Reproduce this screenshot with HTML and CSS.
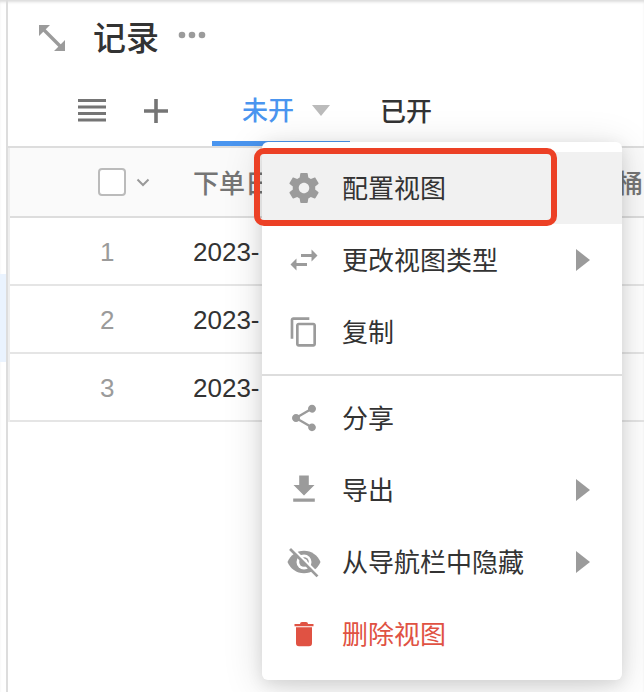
FILE: index.html
```html
<!DOCTYPE html>
<html lang="zh-CN">
<head>
  <meta charset="UTF-8">
  <meta name="viewport" content="width=device-width, initial-scale=1.0">
  <title>记录</title>
  <link rel="stylesheet" href="styles.css">
</head>
<body>
  <div class="app">
    <aside class="sidebar"><div class="sidebar-active"></div></aside>
    <main class="main">
      <header class="title-bar">
        <button class="icon-btn expand" aria-label="展开">
          <svg width="26" height="26" viewBox="0 0 26 26" fill="#9b9b9b"><path d="M0 0h11L0 11zM26 26H15L26 15z"/><path d="M4 4l18 18" stroke="#9b9b9b" stroke-width="3.300"/></svg>
        </button>
        <h1>记录</h1>
        <button class="icon-btn more" aria-label="更多">
          <svg width="28" height="8" viewBox="0 0 28 8" fill="#9b9b9b"><circle cx="4" cy="4" r="3.300"/><circle cx="14" cy="4" r="3.300"/><circle cx="24" cy="4" r="3.300"/></svg>
        </button>
      </header>

      <nav class="tab-bar">
        <button class="icon-btn" aria-label="视图列表">
          <svg width="28" height="24" viewBox="0 0 28 24" fill="#757575"><path d="M0 0h28v3H0zM0 6.500h28v3H0zM0 13h28v3H0zM0 19.500h28v3H0z"/></svg>
        </button>
        <button class="icon-btn add" aria-label="添加视图">
          <svg width="24" height="24" viewBox="0 0 24 24" fill="#757575"><path d="M10.200 0h3.600v10.200H24v3.600H13.800V24h-3.600V13.800H0v-3.600h10.200z"/></svg>
        </button>
        <div class="tab-wrap">
          <button class="tab active"><span>未开</span>
            <svg width="18" height="11" viewBox="0 0 18 11"><path d="M0 0h18L9 11z" fill="#bbb"/></svg>
          </button>
          <div class="menu">
            <button class="menu-item current">
              <svg width="36" height="36" viewBox="0 0 24 24"><path d="M19.430 12.980c.04-.32.07-.64.07-.98s-.03-.66-.07-.98l2.110-1.650c.19-.15.24-.42.12-.64l-2-3.460c-.12-.22-.39-.3-.61-.22l-2.490 1c-.52-.4-1.080-.73-1.690-.98l-.38-2.650C14.460 2.180 14.250 2 14 2h-4c-.25 0-.46.18-.49.42l-.38 2.650c-.61.25-1.170.59-1.690.98l-2.490-1c-.23-.09-.49 0-.61.22l-2 3.460c-.13.22-.07.49.12.64l2.110 1.650c-.04.32-.07.65-.07.98s.03.66.07.98l-2.110 1.650c-.19.15-.24.42-.12.64l2 3.460c.12.22.39.3.61.22l2.490-1c.52.4 1.080.73 1.690.98l.38 2.650c.03.24.24.42.49.42h4c.25 0 .46-.18.49-.42l.38-2.650c.61-.25 1.170-.59 1.690-.98l2.490 1c.23.09.49 0 .61-.22l2-3.460c.12-.22.07-.49-.12-.64l-2.110-1.650zM12 15.500c-1.930 0-3.500-1.570-3.500-3.500s1.570-3.500 3.500-3.500 3.500 1.570 3.500 3.500-1.570 3.500-3.500 3.500z"/></svg>
              <span>配置视图</span>
            </button>
            <button class="menu-item">
              <svg width="36" height="36" viewBox="0 0 24 24"><path d="M6.990 11L3 15l3.990 4v-3H14v-2H6.990v-3zM21 9l-3.990-4v3H10v2h7.010v3L21 9z"/></svg>
              <span>更改视图类型</span>
              <i class="arrow"></i>
            </button>
            <button class="menu-item">
              <svg class="small" width="32" height="32" viewBox="0 0 24 24"><path d="M16 1H4c-1.100 0-2 .9-2 2v14h2V3h12V1zm3 4H8c-1.100 0-2 .9-2 2v14c0 1.100.9 2 2 2h11c1.100 0 2-.9 2-2V7c0-1.100-.9-2-2-2zm0 16H8V7h11v14z"/></svg>
              <span>复制</span>
            </button>
            <hr>
            <button class="menu-item">
              <svg class="small" width="32" height="32" viewBox="0 0 24 24"><path d="M18 16.080c-.76 0-1.440.3-1.960.77L8.910 12.700c.05-.23.09-.46.09-.7s-.04-.47-.09-.7l7.050-4.110c.54.5 1.250.81 2.040.81 1.660 0 3-1.340 3-3s-1.340-3-3-3-3 1.340-3 3c0 .24.04.47.09.7L8.040 9.810C7.500 9.310 6.790 9 6 9c-1.660 0-3 1.340-3 3s1.340 3 3 3c.79 0 1.500-.31 2.040-.81l7.120 4.160c-.05.21-.08.43-.08.65 0 1.610 1.310 2.920 2.920 2.920s2.920-1.310 2.920-2.920-1.310-2.920-2.920-2.920z"/></svg>
              <span>分享</span>
            </button>
            <button class="menu-item">
              <svg width="36" height="36" viewBox="0 0 24 24"><path d="M19 8.700h-3.800V2.300H8.800v6.400H5l7 7 7-7zM4.800 17.600v2.200h14.400v-2.200z"/></svg>
              <span>导出</span>
              <i class="arrow"></i>
            </button>
            <button class="menu-item">
              <svg width="36" height="36" viewBox="0 0 24 24">
                <path d="M1 12c1.730-4.390 6-7.500 11-7.500s9.270 3.110 11 7.500c-1.730 4.390-6 7.500-11 7.500S2.730 16.390 1 12z"/>
                <circle cx="12" cy="12" r="5" fill="#fff"/>
                <circle cx="12" cy="12" r="3.200"/>
                <path d="M12.300 10.200a2 2 0 0 1 1.600 1.600" fill="none" stroke="#fff" stroke-width="0.900"/>
                <path d="M4 2.600l18.200 18.200" stroke="#fff" stroke-width="1.600"/>
                <path d="M2.700 3.300L21 21.600" stroke="#9b9b9b" stroke-width="1.800"/>
              </svg>
              <span>从导航栏中隐藏</span>
              <i class="arrow"></i>
            </button>
            <button class="menu-item danger">
              <svg class="small" width="32" height="32" viewBox="0 0 32 32"><path d="M6.500 6h5.500q0-2 2-2h4q2 0 2 2h5.500v2.300h-19zM8 9.300h16v16q0 3-3 3H11q-3 0-3-3z"/></svg>
              <span>删除视图</span>
            </button>
            <div class="highlight"></div>
          </div>
        </div>
        <button class="tab"><span>已开</span></button>
      </nav>

      <table class="grid">
        <colgroup><col class="col-index"><col class="col-date"><col></colgroup>
        <thead>
          <tr>
            <th>
              <div class="select-all">
                <input type="checkbox" aria-label="全选">
                <svg width="14" height="10" viewBox="0 0 14 10"><path d="M1.500 2.500l5.500 5.500 5.500-5.500" fill="none" stroke="#999" stroke-width="2"/></svg>
              </div>
            </th>
            <th>下单日期</th>
            <th>桶</th>
          </tr>
        </thead>
        <tbody>
          <tr><td class="index">1</td><td>2023-</td><td></td></tr>
          <tr><td class="index">2</td><td>2023-</td><td></td></tr>
          <tr><td class="index">3</td><td>2023-</td><td></td></tr>
        </tbody>
      </table>
    </main>
  </div>
</body>
</html>
```

FILE: styles.css
```css
* {
  box-sizing: border-box;
}
body {
  margin: 0;
  background: #fff;
  color: #333;
  font-family: "Liberation Sans", "Noto Sans CJK SC", sans-serif;
  font-size: 26px;
}
button {
  border: 0;
  padding: 0;
  background: none;
  color: inherit;
  font: inherit;
  cursor: pointer;
}
.app {
  display: flex;
  min-height: 100vh;
  box-shadow: inset 0 3px 3px -1px rgba(0, 0, 0, 0.14);
}
.sidebar {
  flex: none;
  width: 8px;
  padding-top: 274px;
  border-right: 2px solid #ddd;
}
.sidebar-active {
  height: 88px;
  background: #eaf3fe;
}
.main {
  flex: 1;
  min-width: 0;
}

/* title */
.title-bar {
  display: flex;
  align-items: center;
  height: 76px;
  padding-left: 31px;
}
.icon-btn {
  display: flex;
}
h1 {
  margin: 2px 19px 0 28px;
  font-size: 33px;
  font-weight: 500;
  line-height: 40px;
}
.more {
  margin-bottom: 6px;
}

/* tabs */
.tab-bar {
  display: flex;
  align-items: center;
  height: 72px;
  padding-left: 70px;
  border-bottom: 2px solid #ddd;
}
.add {
  margin: 0 44px 0 38px;
}
.tab-wrap {
  position: relative;
}
.tab {
  display: flex;
  align-items: center;
  gap: 18px;
  height: 70px;
  padding: 0 30px;
  font-weight: 500;
}
.tab span,
.menu-item span {
  padding-bottom: 4px;
}
.tab.active {
  padding: 4px 20px 0 30px;
  border-bottom: 5px solid #4a95ef;
  color: #4a95ef;
}

/* dropdown menu */
.menu {
  position: absolute;
  top: 66px;
  left: 50px;
  z-index: 1;
  width: 360px;
  padding: 10px 0;
  border-radius: 6px;
  background: #fff;
  box-shadow: 0 4px 16px rgba(0, 0, 0, 0.1), 0 6px 40px rgba(0, 0, 0, 0.14);
}
.menu-item {
  display: flex;
  align-items: center;
  width: 100%;
  height: 72px;
  padding: 0 32px 0 24px;
  text-align: left;
}
.menu-item svg {
  flex: none;
  margin-right: 20px;
  fill: #9b9b9b;
}
.menu-item .small {
  margin: 0 22px 0 2px;
}
.menu-item.current {
  background: #f1f1f1;
}
.menu-item.danger {
  color: #e05243;
}
.menu-item.danger svg {
  fill: #e05243;
}
.menu hr {
  margin: 6px 0;
  border: 0;
  border-top: 2px solid #ddd;
}
.arrow {
  margin-left: auto;
  border: 11px solid transparent;
  border-right: 0;
  border-left: 14px solid #9b9b9b;
}
.highlight {
  position: absolute;
  top: 6px;
  left: -8px;
  width: 303px;
  height: 78px;
  border: 6px solid #ec4025;
  border-radius: 10px;
  pointer-events: none;
}

/* records */
.grid {
  width: 100%;
  table-layout: fixed;
  border-collapse: separate;
  border-spacing: 0;
  border-left: 2px solid #eee;
}
.col-index {
  width: 183px;
}
.col-date {
  width: 424px;
}
.grid th,
.grid td {
  height: 68px;
  padding: 2px 0 0;
  border-bottom: 2px solid #e5e5e5;
  text-align: left;
  white-space: nowrap;
  overflow: hidden;
}
.grid th {
  height: 70px;
  padding: 0 0 2px;
  border-bottom-color: #ddd;
  background: #fafafa;
  color: #757575;
  font-weight: 500;
}
.grid .index {
  padding-left: 90px;
  color: #9b9b9b;
}
.select-all {
  display: flex;
  align-items: center;
  gap: 10px;
  padding: 2px 0 0 88px;
}
.select-all input {
  appearance: none;
  width: 28px;
  height: 28px;
  margin: 0;
  border: 2px solid #bbb;
  border-radius: 4px;
  background: #fff;
}
```
